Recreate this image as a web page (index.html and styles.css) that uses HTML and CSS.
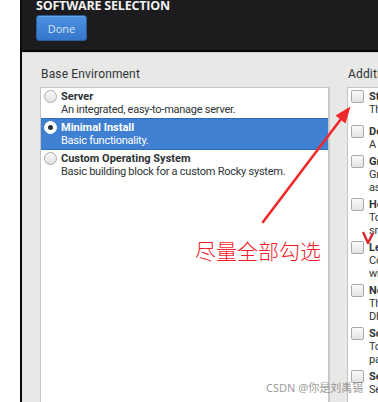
FILE: index.html
```html
<!DOCTYPE html>
<html lang="en">
<head>
<meta charset="utf-8">
<title>Software Selection</title>
<link rel="stylesheet" href="styles.css">
</head>
<body>
<div class="page">
  <div class="gutter"></div>
  <div class="spoke">
    <header class="hdr">
      <h1 class="hdr-title">SOFTWARE SELECTION</h1>
      <button class="done">Done</button>
    </header>
    <main class="content">
      <section class="col col-base">
        <h2 class="col-label">Base Environment</h2>
        <div class="list">
          <div class="env">
            <span class="radio"></span>
            <div class="env-text">
              <div class="env-name">Server</div>
              <div class="env-desc">An integrated, easy-to-manage server.</div>
            </div>
          </div>
          <div class="env env-selected">
            <span class="radio radio-on"></span>
            <div class="env-text">
              <div class="env-name">Minimal Install</div>
              <div class="env-desc">Basic functionality.</div>
            </div>
          </div>
          <div class="env">
            <span class="radio"></span>
            <div class="env-text">
              <div class="env-name">Custom Operating System</div>
              <div class="env-desc">Basic building block for a custom Rocky system.</div>
            </div>
          </div>
        </div>
      </section>
      <section class="col col-addons">
        <h2 class="col-label">Additional software for Selected Environment</h2>
        <div class="list list-addons">
          <div class="addon addon-first">
            <span class="check"></span>
            <div class="addon-text">
              <div class="addon-name">Standard</div>
              <div class="addon-desc">The standard installation of Rocky Linux.</div>
            </div>
          </div>
          <div class="addon">
            <span class="check"></span>
            <div class="addon-text">
              <div class="addon-name">Development Tools</div>
              <div class="addon-desc">A basic development environment.</div>
            </div>
          </div>
          <div class="addon">
            <span class="check"></span>
            <div class="addon-text">
              <div class="addon-name">Graphical Administration Tools</div>
              <div class="addon-desc">Graphical system administration tools for managing many</div>
              <div class="addon-desc">aspects of a system.</div>
            </div>
          </div>
          <div class="addon">
            <span class="check"></span>
            <div class="addon-text">
              <div class="addon-name">Headless Management</div>
              <div class="addon-desc">Tools for managing the system without an attached graphical</div>
              <div class="addon-desc">smart console.</div>
            </div>
          </div>
          <div class="addon">
            <span class="check"></span>
            <div class="addon-text">
              <div class="addon-name">Legacy UNIX Compatibility</div>
              <div class="addon-desc">Compatibility programs for migration from or working</div>
              <div class="addon-desc">with legacy UNIX environments.</div>
            </div>
          </div>
          <div class="addon">
            <span class="check"></span>
            <div class="addon-text">
              <div class="addon-name">Network Servers</div>
              <div class="addon-desc">These packages include network-based servers such as</div>
              <div class="addon-desc">DHCP, Kerberos and NIS.</div>
            </div>
          </div>
          <div class="addon">
            <span class="check"></span>
            <div class="addon-text">
              <div class="addon-name">Scientific Support</div>
              <div class="addon-desc">Tools for mathematical and scientific computations, and</div>
              <div class="addon-desc">parallel computing.</div>
            </div>
          </div>
          <div class="addon">
            <span class="check"></span>
            <div class="addon-text">
              <div class="addon-name">Security Tools</div>
              <div class="addon-desc">Security tools for integrity and trust verification.</div>
            </div>
          </div>
        </div>
      </section>
    </main>
  </div>
</div>

<svg class="marks" width="378" height="402" viewBox="0 0 378 402" aria-hidden="true">
  <line x1="263" y1="222" x2="341" y2="119" stroke="#f0282a" stroke-width="2.6" stroke-linecap="round"/>
  <polygon points="350.5,106.5 345.5,123.5 335.5,115.5" fill="#f0282a"/>
  <path d="M363 232 L368 243 L373 233" fill="none" stroke="#d8262a" stroke-width="2.4" stroke-linejoin="round"/>
</svg>
<div class="note">尽量全部勾选</div>
<div class="watermark">CSDN @你是刘禹锡</div>
</body>
</html>
```

FILE: styles.css
```css
html, body {
  margin: 0;
  padding: 0;
}
body {
  width: 378px;
  height: 402px;
  overflow: hidden;
  background: #ffffff;
  font-family: Roboto, "Open Sans", sans-serif;
  position: relative;
}
.page {
  display: flex;
  height: 402px;
}
.gutter {
  width: 20px;
  flex: none;
  background: #ffffff;
}
.spoke {
  flex: none;
  width: 420px;
  border-left: 2px solid #0b0b0c;
  display: flex;
  flex-direction: column;
}
.hdr {
  height: 50px;
  flex: none;
  background: #1c1c1e;
  border-bottom: 2px solid #060607;
  padding-left: 14px;
  box-sizing: content-box;
}
.hdr-title {
  margin: 0;
  font-family: "Open Sans", sans-serif;
  font-size: 12.5px;
  line-height: 12px;
  font-weight: 700;
  color: #f2f2f2;
  letter-spacing: -0.2px;
}
.done {
  display: block;
  margin-top: 3px;
  width: 51px;
  height: 26px;
  border: 1px solid #2b5d9e;
  border-radius: 3px;
  background: linear-gradient(#4b91e2, #3676cc);
  color: #d9e4f2;
  font-family: "Open Sans", sans-serif;
  font-size: 11px;
  padding: 0;
  box-shadow: inset 0 1px 0 rgba(255,255,255,0.15);
}
.content {
  flex: 1;
  background: #e8e8e7;
  border-top: 1px solid #cfcfcf;
  display: flex;
  gap: 17px;
  padding: 13px 0 0 18px;
}
.col {
  display: flex;
  flex-direction: column;
}
.col-base {
  width: 290px;
  flex: none;
}
.col-addons {
  width: 300px;
  flex: none;
}
.col-label {
  margin: 0 0 5px 1px;
  font-size: 12px;
  line-height: 16px;
  font-weight: 400;
  color: #2e3436;
  white-space: nowrap;
  letter-spacing: 0.15px;
}
.list {
  flex: 1;
  background: #ffffff;
  border: 1px solid #c4c4c4;
  border-bottom: none;
}
.col-base .list {
  border-right: 2px solid #c9c9c9;
}
.env {
  display: flex;
  gap: 4px;
  padding: 2px 0 2px 2px;
  border: 1px solid transparent;
  border-left: none;
  border-right: none;
  margin-top: -1px;
}
.env:first-child {
  margin-top: 0;
  border-top: none;
  padding-top: 2px;
}
.env-selected {
  background: #3f80d3;
  border-color: #2f6cbb;
  color: #ffffff;
}
.radio {
  flex: none;
  width: 11px;
  height: 11px;
  border: 1px solid #a8a8a8;
  border-radius: 50%;
  background: linear-gradient(#f9f9f9, #e2e2e2);
  margin-left: 1px;
}
.radio-on {
  background: #ffffff;
  border-color: #ffffff;
  position: relative;
}
.radio-on::after {
  content: "";
  position: absolute;
  left: 3px;
  top: 3px;
  width: 5px;
  height: 5px;
  border-radius: 50%;
  background: #2e3436;
}
.env-text, .addon-text {
  white-space: nowrap;
  font-size: 11px;
  line-height: 13px;
  color: #2e3436;
}
.env-desc, .addon-desc {
  letter-spacing: -0.25px;
}
.env-selected .env-text {
  color: #ffffff;
}
.env-name, .addon-name {
  font-weight: 700;
}
.addon {
  display: flex;
  gap: 5px;
  padding: 2px 0 2px 3px;
}
.addon-first {
  padding-bottom: 7px;
}
.check {
  flex: none;
  width: 11px;
  height: 11px;
  border: 1px solid #a9a9a9;
  border-radius: 2px;
  background: linear-gradient(#fafafa, #e3e3e3);
  margin-top: 0;
}
.marks {
  position: absolute;
  left: 0;
  top: 0;
  pointer-events: none;
}
.note {
  position: absolute;
  left: 195px;
  top: 237px;
  font-family: "Noto Sans CJK SC", sans-serif;
  font-weight: 300;
  font-size: 21px;
  line-height: 26px;
  color: #f5222a;
  letter-spacing: 0;
  white-space: nowrap;
}
.watermark {
  position: absolute;
  left: 266px;
  top: 381px;
  font-family: "Noto Sans", "Noto Sans CJK SC", sans-serif;
  font-size: 11px;
  line-height: 14px;
  color: rgba(120, 120, 120, 0.75);
  white-space: nowrap;
}
```
